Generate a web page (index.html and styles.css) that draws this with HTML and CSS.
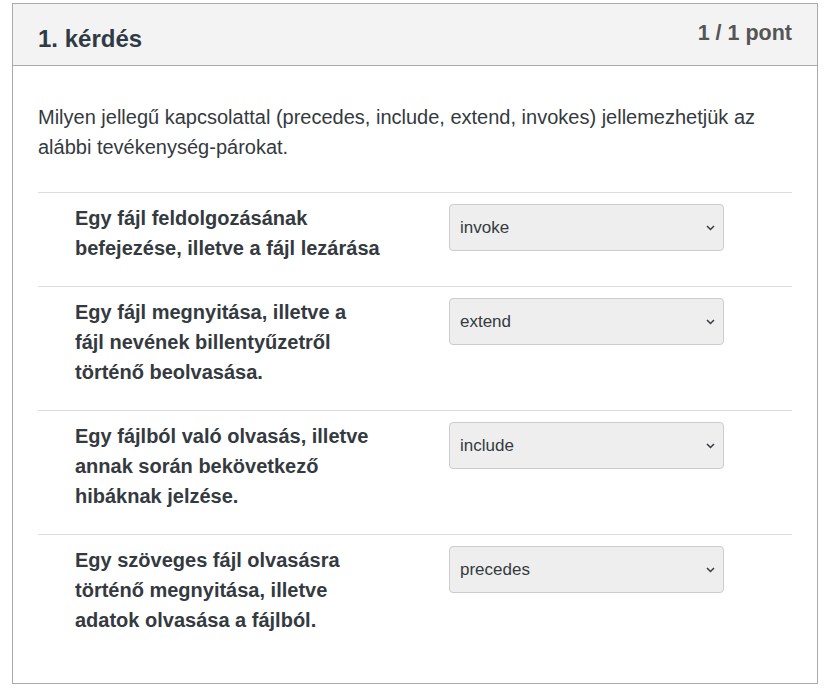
FILE: index.html
```html
<!DOCTYPE html>
<html lang="hu">
<head>
<meta charset="utf-8">
<link rel="stylesheet" href="styles.css">
</head>
<body>
<div class="card">
  <div class="card-header">
    <h2 class="title">1. kérdés</h2>
    <div class="points">1 / 1 pont</div>
  </div>
  <div class="card-body">
    <p class="question">Milyen jellegű kapcsolattal (precedes, include, extend, invokes) jellemezhetjük az alábbi tevékenység-párokat.</p>
    <div class="rows">
      <div class="row">
        <div class="label">Egy fájl feldolgozásának befejezése, illetve a fájl lezárása</div>
        <div class="control">
          <div class="select-wrap">
            <select class="select"><option>invoke</option></select>
            <svg class="chev" width="9" height="6" viewBox="0 0 9 6"><path d="M1 1 L4.5 4.5 L8 1" fill="none" stroke="#343a40" stroke-width="1.5"/></svg>
          </div>
        </div>
      </div>
      <div class="row">
        <div class="label">Egy fájl megnyitása, illetve a fájl nevének billentyűzetről történő beolvasása.</div>
        <div class="control">
          <div class="select-wrap">
            <select class="select"><option>extend</option></select>
            <svg class="chev" width="9" height="6" viewBox="0 0 9 6"><path d="M1 1 L4.5 4.5 L8 1" fill="none" stroke="#343a40" stroke-width="1.5"/></svg>
          </div>
        </div>
      </div>
      <div class="row">
        <div class="label">Egy fájlból való olvasás, illetve annak során bekövetkező hibáknak jelzése.</div>
        <div class="control">
          <div class="select-wrap">
            <select class="select"><option>include</option></select>
            <svg class="chev" width="9" height="6" viewBox="0 0 9 6"><path d="M1 1 L4.5 4.5 L8 1" fill="none" stroke="#343a40" stroke-width="1.5"/></svg>
          </div>
        </div>
      </div>
      <div class="row last">
        <div class="label">Egy szöveges fájl olvasásra történő megnyitása, illetve adatok olvasása a fájlból.</div>
        <div class="control">
          <div class="select-wrap">
            <select class="select"><option>precedes</option></select>
            <svg class="chev" width="9" height="6" viewBox="0 0 9 6"><path d="M1 1 L4.5 4.5 L8 1" fill="none" stroke="#343a40" stroke-width="1.5"/></svg>
          </div>
        </div>
      </div>
    </div>
  </div>
</div>
</body>
</html>
```

FILE: styles.css
```css
* { box-sizing: border-box; }
html, body { margin: 0; padding: 0; background: #fff; }
body {
  font-family: "Liberation Sans", Arial, sans-serif;
  color: #343a40;
  padding: 3px 12px 0 12px;
}
.card {
  width: 806px;
  height: 681px;
  border: 1px solid #aaa;
  display: flex;
  flex-direction: column;
}
.card-header {
  background: #f3f3f3;
  border-bottom: 1px solid #aaa;
  height: 63px;
  padding: 0 25px;
  display: flex;
  justify-content: space-between;
  align-items: flex-start;
}
.title {
  margin: 0;
  padding-top: 23px;
  font-size: 24px;
  font-weight: bold;
  line-height: 24px;
  color: #2f3a44;
}
.points {
  padding-top: 17px;
  font-size: 21.5px;
  font-weight: bold;
  line-height: 24px;
  color: #555;
}
.card-body {
  padding: 36px 25px 25px 25px;
}
.question {
  margin: 0 0 30px 0;
  font-size: 20px;
  line-height: 30px;
}
.rows {
  border-top: 1px solid #ddd;
}
.row {
  display: flex;
  border-bottom: 1px solid #ddd;
  padding: 10px 0 23px 37px;
}
.row.last { border-bottom: none; }
.label {
  flex: none;
  width: 305.2px;
  margin-right: 68.8px;
  font-size: 20px;
  font-weight: bold;
  line-height: 30px;
}
.control {
  padding-top: 1px;
}
.select-wrap {
  position: relative;
  width: 275px;
  height: 47px;
}
.select {
  appearance: none;
  -webkit-appearance: none;
  width: 100%;
  height: 100%;
  background: #eee;
  border: 1px solid #ccc;
  border-radius: 4px;
  padding: 0 30px 0 10px;
  font-family: "Liberation Sans", Arial, sans-serif;
  font-size: 17px;
  color: #343a40;
}
.chev {
  position: absolute;
  right: 9px;
  top: 21px;
  pointer-events: none;
}
```
